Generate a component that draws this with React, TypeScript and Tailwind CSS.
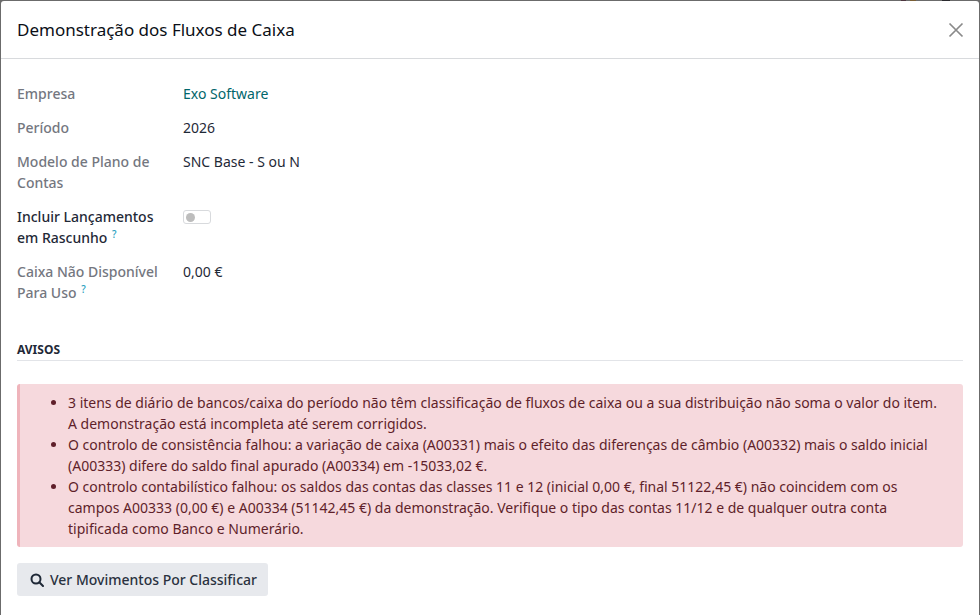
import React from "react";

function Label({ children, dim = true }: { children: React.ReactNode; dim?: boolean }) {
  return <div className={`w-[166px] pr-2 font-medium ${dim ? "text-[#74777f]" : "text-[#1f2937]"}`}>{children}</div>;
}

function Help() {
  return <sup className="ml-[1px] text-[10px] leading-none text-[#2a9fc0]">?</sup>;
}

export default function App() {
  return (
    <div className="relative h-[615px] w-[980px] overflow-hidden bg-[#6b6b6b] pl-px pr-px pt-px font-['Noto_Sans',sans-serif] text-[14px] leading-[21px] text-[#1f2937]">
      <div className="absolute top-0 left-[901px] h-px w-[5px] bg-[#4d3640]" />
      <div className="absolute top-0 left-[910px] h-px w-[6px] bg-[#7a5f36]" />
      <div className="absolute top-0 left-[942px] h-px w-[8px] bg-[#2a2a2e]" />
      <div className="h-[614px] rounded-t-[3px] bg-white">
        <div className="flex h-[58px] items-center justify-between border-b border-[#d8dadd] pl-4 pr-[15px]">
          <h1 className="text-[17px] leading-[24px] font-normal text-[#0b0f17]">Demonstração dos Fluxos de Caixa</h1>
          <svg width="16" height="16" viewBox="0 0 16 16" className="text-[#8a8a8a]" fill="none" stroke="currentColor" strokeWidth="1.7">
            <path d="M1.5 1.5 14.5 14.5M14.5 1.5 1.5 14.5" />
          </svg>
        </div>
        <div className="px-4 pt-6">
          <div className="flex flex-col gap-[13px]">
            <div className="flex"><Label>Empresa</Label><div className="text-[#01666b]">Exo Software</div></div>
            <div className="flex"><Label>Período</Label><div>2026</div></div>
            <div className="flex"><Label>Modelo de Plano de Contas</Label><div>SNC Base - S ou N</div></div>
            <div className="flex">
              <Label dim={false}>Incluir Lançamentos em Rascunho <Help /></Label>
              <div className="pt-[4px]">
                <div className="flex h-[14px] w-[28px] items-center rounded-[3px] border border-[#d8dadd] bg-white pl-[2px]">
                  <div className="size-[9px] rounded-full bg-[#bdbdbd]" />
                </div>
              </div>
            </div>
            <div className="flex"><Label>Caixa Não Disponível Para Uso <Help /></Label><div>0,00 €</div></div>
          </div>
          <div className="mt-[38px] border-b border-[#e2e4e8] pb-px text-[12px] leading-[18px] font-bold text-[#1f2937]">AVISOS</div>
          <div className="mt-[23px] w-[946px] rounded-[3px] border-l-[3px] border-[#efb4bb] bg-[#f6d9dd] pt-[8px] pb-[8px] pl-[48px] pr-[16px] text-[#5f1f2a]">
            <ul className="list-disc">
              <li>3 itens de diário de bancos/caixa do período não têm classificação de fluxos de caixa ou a sua distribuição não soma o valor do item. A demonstração está incompleta até serem corrigidos.</li>
              <li>O controlo de consistência falhou: a variação de caixa (A00331) mais o efeito das diferenças de câmbio (A00332) mais o saldo inicial (A00333) difere do saldo final apurado (A00334) em -15033,02 €.</li>
              <li>O controlo contabilístico falhou: os saldos das contas das classes 11 e 12 (inicial 0,00 €, final 51122,45 €) não coincidem com os campos A00333 (0,00 €) e A00334 (51142,45 €) da demonstração. Verifique o tipo das contas 11/12 e de qualquer outra conta tipificada como Banco e Numerário.</li>
            </ul>
          </div>
          <button className="mt-4 flex h-[33px] items-center gap-[6px] rounded-[3px] bg-[#e7e9ed] pl-[13px] pr-[11px] font-medium text-[#2a3240]">
            <svg width="14" height="14" viewBox="0 0 14 14" fill="none" stroke="#1f2937" strokeWidth="2">
              <circle cx="6" cy="6" r="4.5" />
              <path d="M9.3 9.3 13 13" strokeLinecap="round" />
            </svg>
            Ver Movimentos Por Classificar
          </button>
        </div>
      </div>
    </div>
  );
}
